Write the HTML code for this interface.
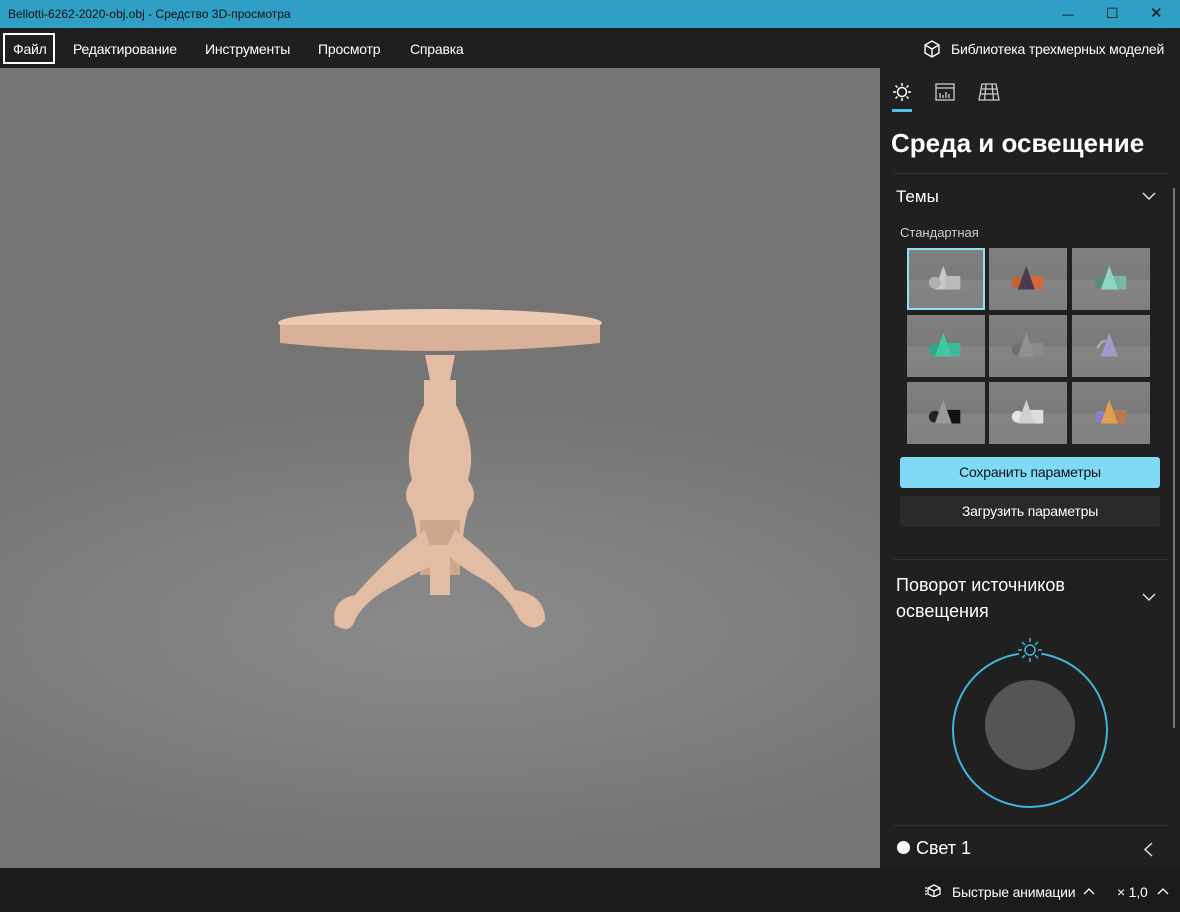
<!DOCTYPE html><html><head><meta charset="utf-8"><style>
*{margin:0;padding:0;box-sizing:border-box}
body{width:1180px;height:912px;overflow:hidden;font-family:"Liberation Sans",sans-serif;background:#1c1c1c;position:relative;color:#fff}
.abs{position:absolute}
.tb{left:0;top:0;width:1180px;height:28px;background:#2f9fc6;color:#111;font-size:12px;line-height:28px;padding-left:8px}
.menu{left:0;top:28px;width:1180px;height:40px;background:#1f1f1f;font-size:14px;letter-spacing:-0.2px}
.menu span{position:absolute;top:13px}
.vp{left:0;top:68px;width:880px;height:800px;background:radial-gradient(ellipse 650px 230px at 440px 560px,#8a8a8a,#7f7f7f 55%,#747474 100%)}
.panel{left:880px;top:68px;width:300px;height:800px;background:#202020}
.th{position:absolute;width:78px;height:62px;background:linear-gradient(#808080,#7a7a7a 50%,#858585 52%,#808080)}
.bb{left:0;top:868px;width:1180px;height:44px;background:#1b1b1b;font-size:14px;letter-spacing:-0.2px}
</style></head><body>
<div class="abs tb">Bellotti-6262-2020-obj.obj - Средство 3D-просмотра
<span style="position:absolute;left:1062px;top:0">—</span><span style="position:absolute;left:1106px;top:-1px;font-size:14px">☐</span><span style="position:absolute;left:1150px;top:0;font-size:15px">✕</span></div>
<div class="abs menu">
<div style="position:absolute;left:3px;top:5px;width:52px;height:31px;border:2px solid #fff"></div>
<span style="left:13px">Файл</span><span style="left:73px">Редактирование</span><span style="left:205px">Инструменты</span><span style="left:318px">Просмотр</span><span style="left:410px">Справка</span>
<svg style="position:absolute;left:922px;top:11px" width="20" height="20" viewBox="0 0 20 20" fill="none" stroke="#fff" stroke-width="1.4"><path d="M10 2l7 4v8l-7 4-7-4V6zM3 6l7 4 7-4M10 10v8"/></svg>
<span style="left:951px">Библиотека трехмерных моделей</span></div>
<div class="abs vp">
<svg width="880" height="800" viewBox="0 68 880 800">
<g fill="#e2bca3">
<ellipse cx="440" cy="323" rx="162" ry="14" fill="#ecc9b2"/>
<path d="M280 325h320v18q-160 16-320 0z" fill="#d9b199"/>
<path d="M425 355h30l-5 25h6v25q22 40 12 75 12 15 0 30 -5 20 -5 30h-46q0-10-5-30-12-15 0-30-10-35 12-75v-25h6z"/>
<path d="M420 520h40v55h-40z" fill="#cfa78f"/>
<path d="M425 530q-40 30-70 65q-25 5-20 30 15 10 20-5 10-20 40-35q25-15 40-20z"/>
<path d="M455 530q40 30 60 60q30 5 30 30-10 15-25 0-15-30-45-45q-25-15-30-25z"/>
<path d="M430 545q0 30 0 50h20q0-20 0-50z"/>
</g></svg></div>
<div class="abs panel">
<svg style="position:absolute;left:12px;top:14px" width="20" height="20" viewBox="0 0 20 20" stroke="#fff" stroke-width="1.5" fill="none"><circle cx="10" cy="10" r="4.5"/><path d="M10 1v3M10 16v3M1 10h3M16 10h3M3.5 3.5l2 2M14.5 14.5l2 2M3.5 16.5l2-2M14.5 5.5l2-2"/></svg>
<div style="position:absolute;left:12px;top:41px;width:20px;height:3px;background:#4cc2e4"></div>
<svg style="position:absolute;left:55px;top:15px" width="20" height="18" viewBox="0 0 20 18" stroke="#ccc" stroke-width="1.3" fill="none"><rect x="1" y="1" width="18" height="16"/><path d="M1 5h18M5 15v-5M8 15v-3M11 15v-6M14 15v-4"/></svg>
<svg style="position:absolute;left:98px;top:15px" width="22" height="18" viewBox="0 0 22 18" stroke="#ccc" stroke-width="1.3" fill="none"><path d="M4 1h14l3 16H1zM2.5 6h17M1.8 11h18.4M8 1l-1.5 16M14 1l1.5 16"/></svg>
<div style="position:absolute;left:11px;top:60px;font-size:26px;font-weight:bold">Среда и освещение</div>
<div style="position:absolute;left:14px;top:105px;width:274px;height:1px;background:#333"></div>
<div style="position:absolute;left:16px;top:119px;font-size:17px">Темы</div>
<svg style="position:absolute;left:262px;top:124px" width="14" height="9" fill="none" stroke="#ddd" stroke-width="1.5"><path d="M1 1l6 6 6-6"/></svg>
<div style="position:absolute;left:293px;top:120px;width:2px;height:540px;background:#777"></div>
<div style="position:absolute;left:20px;top:157px;font-size:13px;color:#ccc">Стандартная</div>
<div class="th" style="left:27px;top:180px;border:2px solid #8de1f2"></div>
<div class="th" style="left:109px;top:180px"></div>
<div class="th" style="left:192px;top:180px"></div>
<div class="th" style="left:27px;top:247px"></div>
<div class="th" style="left:109px;top:247px"></div>
<div class="th" style="left:192px;top:247px"></div>
<div class="th" style="left:27px;top:314px"></div>
<div class="th" style="left:109px;top:314px"></div>
<div class="th" style="left:192px;top:314px"></div>
<svg style="position:absolute;left:0;top:0" width="300" height="400">
<g transform="translate(48,196) scale(.85)"><path d="M18 2l-10 28h20z" fill="#c8c8c8"/><rect x="20" y="14" width="18" height="16" fill="#bbb"/><circle cx="8" cy="22" r="7" fill="#b0b0b0"/></g>
<g transform="translate(131,196) scale(.85)"><rect x="20" y="14" width="18" height="16" fill="#d06a3a"/><circle cx="8" cy="22" r="7" fill="#c8602f"/><path d="M18 2l-10 28h20z" fill="#4a3a50"/></g>
<g transform="translate(214,196) scale(.85)"><rect x="20" y="14" width="18" height="16" fill="#79b8a8"/><circle cx="8" cy="22" r="7" fill="#5a8a80"/><path d="M18 2l-10 28h20z" fill="#8fd6c0"/></g>
<g transform="translate(48,263) scale(.85)"><rect x="20" y="14" width="18" height="16" fill="#3fb898"/><circle cx="8" cy="22" r="7" fill="#2da888"/><path d="M18 2l-10 28h20z" fill="#3ec8a0"/></g>
<g transform="translate(131,263) scale(.85)"><rect x="20" y="14" width="18" height="16" fill="#8a8a8a"/><circle cx="8" cy="22" r="7" fill="#6f7070"/><path d="M18 2l-10 28h20z" fill="#909090"/></g>
<g transform="translate(214,263) scale(.85)"><path d="M18 2l-10 28h20z" fill="#a09ac8"/><path d="M4 20q6-10 10-8" stroke="#aaa" stroke-width="3" fill="none"/></g>
<g transform="translate(48,330) scale(.85)"><rect x="20" y="14" width="18" height="16" fill="#111"/><circle cx="8" cy="22" r="7" fill="#222"/><path d="M18 2l-10 28h20z" fill="#999"/></g>
<g transform="translate(131,330) scale(.85)"><rect x="20" y="14" width="18" height="16" fill="#ddd"/><circle cx="8" cy="22" r="7" fill="#e4e4e4"/><path d="M18 2l-10 28h20z" fill="#d0d0d0"/></g>
<g transform="translate(214,330) scale(.85)"><rect x="20" y="14" width="18" height="16" fill="#b87a55"/><circle cx="8" cy="22" r="7" fill="#8a80c8"/><path d="M18 2l-10 28h20z" fill="#e0a050"/></g>
</svg>
<div style="position:absolute;left:20px;top:389px;width:260px;height:31px;background:#7fdbf5;border-radius:3px;color:#111;font-size:14px;text-align:center;line-height:31px;letter-spacing:-0.2px">Сохранить параметры</div>
<div style="position:absolute;left:20px;top:428px;width:260px;height:31px;background:#2a2a2a;border-radius:3px;font-size:14px;text-align:center;line-height:31px;letter-spacing:-0.2px">Загрузить параметры</div>
<div style="position:absolute;left:14px;top:491px;width:274px;height:1px;background:#333"></div>
<div style="position:absolute;left:16px;top:504px;font-size:18px;line-height:26px">Поворот источников<br>освещения</div>
<svg style="position:absolute;left:262px;top:525px" width="14" height="9" fill="none" stroke="#ddd" stroke-width="1.5"><path d="M1 1l6 6 6-6"/></svg>
<svg style="position:absolute;left:60px;top:560px" width="180" height="180" viewBox="0 0 180 180"><circle cx="90" cy="102" r="77" fill="none" stroke="#3fb6dc" stroke-width="2"/><circle cx="90" cy="97" r="45" fill="#555"/><circle cx="90" cy="22" r="12" fill="#202020"/><g stroke="#3fb6dc" stroke-width="1.5" fill="none"><circle cx="90" cy="22" r="5"/><path d="M90 10v4M90 30v4M78 22h4M98 22h4M82 14l3 3M95 27l3 3M82 30l3-3M95 17l3-3"/></g></svg>
<div style="position:absolute;left:14px;top:757px;width:274px;height:1px;background:#333"></div>
<div style="position:absolute;left:17px;top:773px;width:13px;height:13px;border-radius:50%;background:#fff"></div>
<div style="position:absolute;left:36px;top:770px;font-size:18px">Свет 1</div>
<svg style="position:absolute;left:264px;top:774px" width="9" height="15" fill="none" stroke="#ddd" stroke-width="1.5"><path d="M8 1L1 7.5 8 14"/></svg>
</div>
<div class="abs bb">
<svg style="position:absolute;left:924px;top:15px" width="20" height="14" fill="none" stroke="#fff" stroke-width="1.3"><path d="M10 2l6 3v6l-6 3-6-3V5zM4 5l6 3 6-3M10 8v6M1 5h2M1 8h2M1 11h2"/></svg>
<span style="position:absolute;left:952px;top:16px">Быстрые анимации</span>
<svg style="position:absolute;left:1083px;top:19px" width="12" height="8" fill="none" stroke="#fff" stroke-width="1.3"><path d="M1 7l5-5 5 5"/></svg>
<span style="position:absolute;left:1117px;top:16px">× 1,0</span>
<svg style="position:absolute;left:1157px;top:19px" width="12" height="8" fill="none" stroke="#fff" stroke-width="1.3"><path d="M1 7l5-5 5 5"/></svg>
</div>
</body></html>
